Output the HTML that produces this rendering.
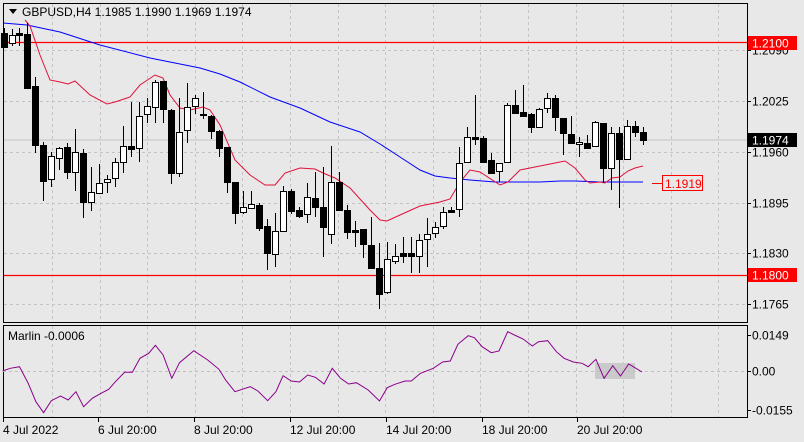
<!DOCTYPE html>
<html><head><meta charset="utf-8"><style>
html,body{margin:0;padding:0;background:#e8e8e8;width:804px;height:442px;overflow:hidden}
svg{display:block}
text{font-family:"Liberation Sans",sans-serif;font-size:12px;fill:#000}
</style></head><body>
<svg id="s" width="804" height="442" xmlns="http://www.w3.org/2000/svg">
<rect width="804" height="442" fill="#e8e8e8"/>
<g id="grid"></g>
<line x1="3" y1="140" x2="747" y2="140" stroke="#c4c4c4" stroke-width="1"/>
<line x1="3" y1="42.5" x2="747" y2="42.5" stroke="#ff0000" stroke-width="1.3"/>
<line x1="3" y1="275.5" x2="747" y2="275.5" stroke="#ff0000" stroke-width="1.3"/>
<polyline fill="none" stroke="#0000ff" stroke-width="1" points="3,23 27,25 60,32 100,45 150,58 200,68 220,74 240,82 270,97 300,108 330,122 360,132 380,144 400,157 420,170 435,176 450,178 470,180 495,182 540,182 560,181 575,181 600,182 643,182"/>
<polyline fill="none" stroke="#e0103a" stroke-width="1" points="25,20 30,26 40,55 50,80 60,82 68,84 75,81 90,95 107,104 115,102 130,97 140,85 155,75 163,78 170,95 180,108 190,110 203,107 210,110 220,125 235,160 250,175 265,185 275,185 285,173 300,168 315,169 323,173 335,178 350,188 370,210 380,220 387,221 400,215 420,206 440,202 450,199 460,182 470,170 480,172 500,185 508,182 520,170 540,166 555,163 565,161 575,168 585,180 590,183 600,182 605,183 612,178 620,177 628,171 635,168 643,166"/>
<g id="candles"></g>
<line x1="652" y1="183.5" x2="662" y2="183.5" stroke="#ff0000"/>
<rect x="662.5" y="175.5" width="40" height="15" fill="#e8e8e8" stroke="#ff0000"/>
<text x="665" y="188" style="fill:#ff0000">1.1919</text>
<rect x="3.5" y="3.5" width="744" height="319" fill="none" stroke="#000"/>
<rect x="3.5" y="325.5" width="744" height="92" fill="none" stroke="#000"/>
<path d="M9,9 L17,9 L13,14 Z" fill="#000"/>
<text x="22" y="16">GBPUSD,H4  1.1985 1.1990 1.1969 1.1974</text>
<g id="ax"></g>
<rect x="748" y="36" width="49" height="14" fill="#ff0000"/>
<text x="752" y="47.5" style="fill:#fff">1.2100</text>
<rect x="748" y="133" width="49" height="14" fill="#000"/>
<text x="752" y="144.5" style="fill:#fff">1.1974</text>
<rect x="748" y="268" width="49" height="14" fill="#ff0000"/>
<text x="752" y="279.5" style="fill:#fff">1.1800</text>
<rect x="595" y="363" width="40" height="16" fill="#cacaca"/>
<line x1="3" y1="371.5" x2="747" y2="371.5" stroke="#c0c0c0" stroke-dasharray="3,3"/>
<polyline id="mar" fill="none" stroke="#8b008b" stroke-width="1"/>
<text x="8" y="340">Marlin -0.0006</text>
</svg>
<script>
var NS="http://www.w3.org/2000/svg";
function el(p,t,a){var e=document.createElementNS(NS,t);for(var k in a)e.setAttribute(k,a[k]);p.appendChild(e);return e;}
var g=document.getElementById('grid');
for(var x=52;x<747;x+=47.6){var xx=Math.round(x)+.5;
 el(g,'line',{x1:xx,y1:4,x2:xx,y2:322,stroke:'#c4c4c4','stroke-dasharray':'3,3'});
 el(g,'line',{x1:xx,y1:326,x2:xx,y2:417,stroke:'#c4c4c4','stroke-dasharray':'3,3'});}
[50,101,152,203,253,304].forEach(function(y){el(g,'line',{x1:4,y1:y+.5,x2:747,y2:y+.5,stroke:'#c4c4c4','stroke-dasharray':'3,3'});});
var ax=document.getElementById('ax');
[[50,'1.2090'],[101,'1.2025'],[152,'1.1960'],[203,'1.1895'],[253,'1.1830'],[304,'1.1765'],[335,'0.0149'],[371,'0.00'],[410,'-0.0155']].forEach(function(a){
 el(ax,'line',{x1:747,y1:a[0]+.5,x2:751,y2:a[0]+.5,stroke:'#000'});
 var t=el(ax,'text',{x:752,y:a[0]+4.5});t.textContent=a[1];});
[[3,'4 Jul 2022'],[98,'6 Jul 20:00'],[194,'8 Jul 20:00'],[290,'12 Jul 20:00'],[386,'14 Jul 20:00'],[482,'18 Jul 20:00'],[577,'20 Jul 20:00']].forEach(function(a){
 var t=el(ax,'text',{x:a[0],y:434});t.textContent=a[1];
 el(ax,'line',{x1:a[0]+.5,y1:418,x2:a[0]+.5,y2:422,stroke:'#000'});});
var C=[[4,33,47,28,47,0],[12,35,43,29,46,1],[19,33,35,28,46,0],[27,34,88,23,88,0],[35,86,145,77,153,0],[43,145,181,142,201,0],[51,156,179,152,187,1],[59,148,158,147,170,1],[67,147,172,143,179,0],[75,152,172,129,191,1],[83,153,202,149,218,0],[91,192,202,167,211,1],[99,183,193,164,194,1],[107,179,182,175,193,1],[115,162,178,158,187,1],[123,146,162,126,173,1],[131,146,149,102,157,0],[139,116,148,102,162,1],[147,106,114,98,123,1],[155,82,107,80,123,1],[163,81,109,81,123,0],[171,110,173,109,184,0],[179,132,173,98,177,1],[187,107,130,83,143,1],[195,98,106,95,114,1],[203,114,115,92,119,0],[211,116,131,115,139,0],[219,131,148,130,157,0],[227,147,182,147,193,0],[235,182,213,182,224,0],[243,207,212,191,214,1],[251,204,208,191,208,1],[259,205,228,203,231,0],[267,226,253,219,270,0],[275,231,254,213,267,1],[283,191,231,186,232,1],[291,191,211,189,214,0],[299,210,216,207,218,0],[307,197,214,183,223,1],[315,198,207,172,217,0],[323,207,227,167,257,0],[331,182,234,146,244,1],[339,182,210,172,210,0],[347,210,232,205,239,0],[355,230,232,221,247,0],[363,229,244,229,258,0],[371,245,268,217,269,0],[379,268,294,243,309,0],[387,259,292,242,294,1],[395,256,261,244,264,1],[403,253,256,237,263,0],[411,253,256,237,273,0],[419,240,256,234,273,1],[427,234,239,218,267,1],[435,227,233,222,238,1],[443,212,226,207,229,1],[451,210,212,207,213,0],[459,163,209,147,217,1],[467,137,162,127,163,1],[475,137,139,95,145,0],[483,138,162,136,163,0],[491,160,173,153,173,0],[499,163,171,163,182,1],[507,105,162,103,162,1],[515,105,113,90,113,0],[523,112,116,85,117,0],[531,114,127,113,133,0],[539,109,127,108,128,1],[547,98,108,93,113,1],[555,98,117,95,131,0],[563,118,133,118,155,0],[571,134,143,116,143,0],[579,142,144,137,157,1],[587,143,148,135,149,0],[595,122,146,121,147,1],[603,123,168,123,183,0],[611,133,168,127,190,1],[619,133,159,127,208,0],[627,126,159,120,159,1],[635,126,132,121,137,0],[643,132,140,127,145,0]];
var cg=document.getElementById('candles');
C.forEach(function(c){var x=c[0]+.5;
 el(cg,'line',{x1:x,y1:c[3],x2:x,y2:c[4],stroke:'#000'});
 var h=Math.max(c[2]-c[1],1);
 el(cg,'rect',{x:c[0]-2.5,y:c[1]+.5,width:6,height:h,fill:c[5]?'#fff':'#000',stroke:'#000'});});
var M=[[5,183],[20,175],[38,170],[55,220],[70,275],[85,308],[100,272],[118,258],[133,270],[148,245],[163,290],[180,265],[197,250],[212,238],[225,215],[243,187],[258,187],[273,145],[290,130],[303,106],[318,135],[335,205],[350,158],[378,122],[405,150],[427,178],[440,210],[458,245],[488,230],[503,243],[522,272],[538,245],[552,197],[568,213],[584,216],[600,195],[615,202],[632,222],[648,175],[664,205],[680,222],[695,218],[718,240],[740,273],[755,233],[770,223],[790,213],[802,213],[820,190],[845,175],[863,156],[878,153],[893,103],[913,77],[925,83],[940,110],[958,128],[973,123],[990,65],[1003,75],[1020,87],[1038,108],[1050,95],[1068,92],[1085,125],[1100,145],[1118,156],[1135,160],[1147,170],[1162,148],[1178,205],[1195,167],[1210,198],[1226,162],[1240,175],[1252,186]];
document.getElementById('mar').setAttribute('points',M.map(function(p){return (p[0]/1.95).toFixed(1)+','+(310+p[1]/3).toFixed(1);}).join(' '));
</script>
</body></html>
